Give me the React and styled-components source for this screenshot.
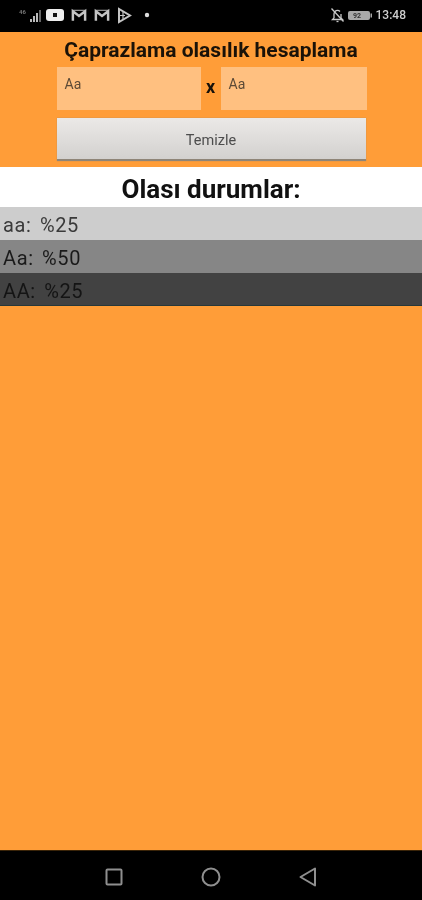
import React from "react";
import styled, { createGlobalStyle } from "styled-components";

const GlobalStyle = createGlobalStyle`
    html, body {
        margin: 0;
        padding: 0;
        background: #000;
    }
    * {
        box-sizing: border-box;
    }
`;

const Screen = styled.div`
    width: 422px;
    height: 900px;
    display: flex;
    flex-direction: column;
    font-family: Roboto, "Liberation Sans", sans-serif;
    overflow: hidden;
    filter: blur(0.4px);
`;

const StatusBar = styled.div`
    height: 32px;
    background: #000;
    display: flex;
    align-items: center;
    justify-content: space-between;
    padding: 0 16px 2px 18px;
    color: #d8d8d8;
`;

const StatusGroup = styled.div`
    display: flex;
    align-items: center;
    gap: ${(p) => p.$gap || 4}px;
`;

const Clock = styled.span`
    font-size: 12px;
    font-weight: 500;
    color: #cfcfcf;
`;

const Main = styled.div`
    flex: 1;
    background: #ff9d38;
`;

const Top = styled.div`
    height: 135px;
    display: flex;
    flex-direction: column;
    align-items: center;
`;

const Title = styled.div`
    height: 35px;
    padding-top: 7px;
    font-size: 21px;
    line-height: 22px;
    font-weight: 700;
    color: #1a1208;
`;

const InputRow = styled.div`
    display: flex;
    align-items: center;
    padding-left: 1px;
`;

const Input = styled.div`
    width: ${(p) => p.$width}px;
    height: 43px;
    background: #ffc080;
    padding: 10px 8px;
    font-size: 14px;
    line-height: 14px;
    color: #5c4a36;
`;

const Times = styled.div`
    width: 20px;
    padding-bottom: 5px;
    text-align: center;
    font-size: 18px;
    font-weight: 700;
    color: #17110a;
`;

const ClearButton = styled.div`
    width: 309px;
    height: 43px;
    margin-top: 8px;
    padding-top: 3px;
    background: linear-gradient(180deg, #ebe9e7 0%, #d3d1cf 100%);
    border-bottom: 2px solid #8f8578;
    box-shadow: 0 0 1px #a88a68;
    display: flex;
    align-items: center;
    justify-content: center;
    font-size: 14.500px;
    color: #4d4d4d;
`;

const Heading = styled.div`
    height: 40px;
    background: #fff;
    text-align: center;
    font-size: 26px;
    line-height: 44px;
    font-weight: 700;
    color: #111;
`;

const ResultRow = styled.div`
    height: 33px;
    background: ${(p) => p.$bg};
    border-bottom: ${(p) => (p.$edge ? "1px solid #27383a" : "none")};
    padding-left: 3px;
    font-size: 20px;
    line-height: 36px;
    letter-spacing: 0.6px;
    word-spacing: -1.300px;
    white-space: pre;
    color: ${(p) => p.$color};
`;

const NavBar = styled.div`
    height: 50px;
    background: #000;
    border-top: 1px solid #3a2408;
    display: flex;
    align-items: center;
    padding: 2px 0 0 105px;
    gap: 78px;
`;

const SignalIcon = () => (
    <svg width="24" height="18" viewBox="0 0 24 18">
        <text x="1" y="8" fontSize="6" fontWeight="700" fill="#777" fontFamily="Roboto">46</text>
        <rect x="12" y="13" width="2" height="3" fill="#bbb" />
        <rect x="15" y="10" width="2" height="6" fill="#bbb" />
        <rect x="18" y="7" width="2" height="9" fill="#bbb" />
        <rect x="21" y="4" width="2" height="12" fill="#666" />
    </svg>
);

const YoutubeIcon = () => (
    <svg width="18" height="14" viewBox="0 0 18 14">
        <rect x="0" y="1" width="18" height="12" rx="3" fill="#eee" />
        <rect x="7" y="5" width="4" height="4" fill="#111" />
    </svg>
);

const MailIcon = () => (
    <svg width="16" height="14" viewBox="0 0 17 14" fill="none" stroke="#c4c4c4" strokeWidth="2.600">
        <path d="M2 13V3l6.500 5L15 3v10" />
        <path d="M2 2h13" strokeWidth="1" />
    </svg>
);

const PlayIcon = () => (
    <svg width="15" height="17" viewBox="0 0 15 17" fill="none" stroke="#c4c4c4" strokeWidth="2">
        <path d="M2 2v13l11-6.500z" />
        <path d="M2 8.500h6M6 5v7" strokeWidth="1.200" />
    </svg>
);

const MutedBell = () => (
    <svg width="15" height="16" viewBox="0 0 15 16" fill="none" stroke="#c8c8c8" strokeWidth="1.300">
        <path d="M4 11V7a3.500 3.500 0 0 1 6-2.500M11 7v4l1.500 1.500h-10L4 11" />
        <path d="M6.500 14.500h2" />
        <path d="M1.500 1.500l12 13" />
    </svg>
);

const Battery = () => (
    <svg width="25" height="11" viewBox="0 0 25 11">
        <rect x="0" y="1" width="22" height="9" rx="2" fill="#a8a8a8" />
        <rect x="22.500" y="3.500" width="1.500" height="4" fill="#a8a8a8" />
        <text x="5" y="8.200" fontSize="7" fontWeight="700" fill="#333" fontFamily="Roboto">92</text>
    </svg>
);

const NavIcons = () => (
    <>
        <svg width="18" height="18" viewBox="0 0 18 18" fill="none" stroke="#8f8f8f" strokeWidth="2">
            <rect x="1.500" y="1.500" width="15" height="15" rx="1" />
        </svg>
        <svg width="20" height="20" viewBox="0 0 20 20" fill="none" stroke="#8f8f8f" strokeWidth="2">
            <circle cx="10" cy="10" r="8.500" />
        </svg>
        <svg width="18" height="20" viewBox="0 0 18 20" fill="none" stroke="#8f8f8f" strokeWidth="2" strokeLinejoin="round">
            <path d="M16 1.500v17L1.500 10z" />
        </svg>
    </>
);

const results = [
    { label: "aa:  %25", bg: "#cdcdcd", color: "#3a3a3a" },
    { label: "Aa:  %50", bg: "#868686", color: "#1a1a1a" },
    { label: "AA:  %25", bg: "#424242", color: "#141414", edge: true },
];

export default function App() {
    return (
        <Screen>
            <GlobalStyle />
            <StatusBar>
                <StatusGroup $gap={7}>
                    <StatusGroup $gap={4}>
                        <SignalIcon />
                        <YoutubeIcon />
                    </StatusGroup>
                    <MailIcon />
                    <MailIcon />
                    <PlayIcon />
                    <svg width="20" height="6" viewBox="0 0 20 6">
                        <circle cx="8" cy="3" r="2.200" fill="#ddd" />
                    </svg>
                </StatusGroup>
                <StatusGroup $gap={3}>
                    <MutedBell />
                    <Battery />
                    <Clock>13:48</Clock>
                </StatusGroup>
            </StatusBar>
            <Main>
                <Top>
                    <Title>Çaprazlama olasılık hesaplama</Title>
                    <InputRow>
                        <Input $width={144}>Aa</Input>
                        <Times>x</Times>
                        <Input $width={146}>Aa</Input>
                    </InputRow>
                    <ClearButton>Temizle</ClearButton>
                </Top>
                <Heading>Olası durumlar:</Heading>
                {results.map((r) => (
                    <ResultRow key={r.bg} $bg={r.bg} $color={r.color} $edge={r.edge}>
                        {r.label}
                    </ResultRow>
                ))}
            </Main>
            <NavBar>
                <NavIcons />
            </NavBar>
        </Screen>
    );
}
